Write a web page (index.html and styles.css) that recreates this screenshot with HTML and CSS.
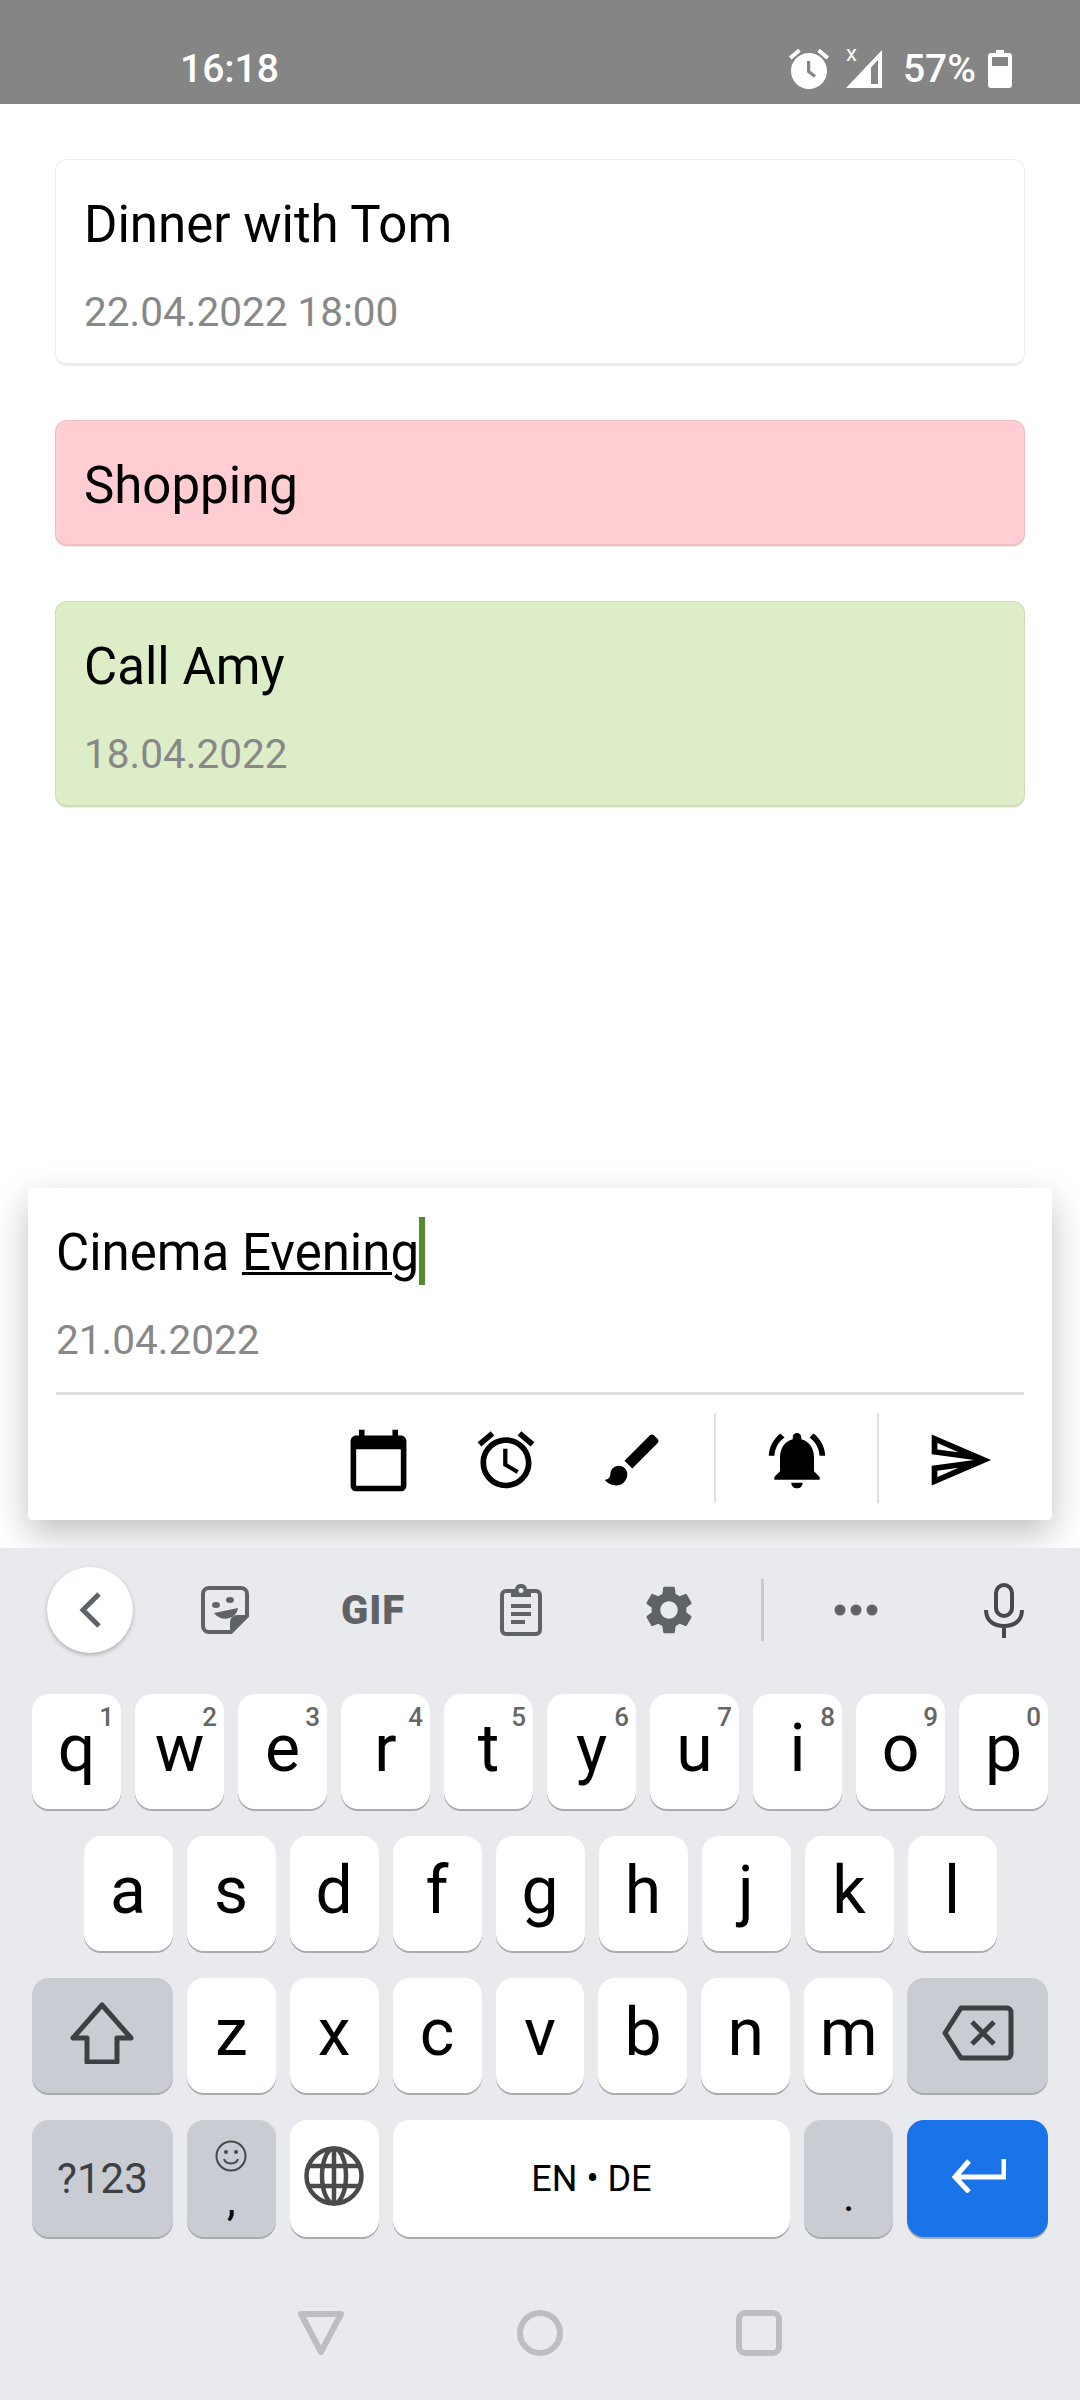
FILE: index.html
```html
<!DOCTYPE html>
<html lang="en">
<head>
    <meta charset="UTF-8">
    <meta name="viewport" content="width=device-width, initial-scale=1.0">
    <title>Todo</title>
    <link rel="stylesheet" href="styles.css">
</head>
<body>
    <header class="status-bar">
        <span class="status-time">16:18</span>
        <div class="status-icons">
            <svg class="status-alarm" viewBox="0 0 24 24" width="48" height="48">
                <path fill="#fff" d="M22 5.72l-4.6-3.86-1.29 1.53 4.6 3.86L22 5.72zM7.88 3.39L6.6 1.86 2 5.71l1.29 1.53 4.59-3.85zM12 4c-4.97 0-9 4.03-9 9s4.03 9 9 9 9-4.03 9-9-4.03-9-9-9z"/>
                <path fill="none" stroke="#858585" stroke-width="1.6" d="M11.8 8v5.2l3.2 2.6"/>
            </svg>
            <div class="status-signal">
                <span class="signal-x">x</span>
                <svg viewBox="0 0 36 38" width="36" height="38">
                    <path fill="#fff" d="M36 0v38H0zM32 10 25 17.500V34h7z"/>
                </svg>
            </div>
            <span class="status-battery-text">57%</span>
            <svg class="status-battery" viewBox="0 0 24 38" width="24" height="38">
                <path fill="#fff" fill-rule="evenodd" d="M8 0h8v3h5a3 3 0 0 1 3 3v29a3 3 0 0 1-3 3H3a3 3 0 0 1-3-3V6a3 3 0 0 1 3-3h5zM4 7v9h16V7z"/>
            </svg>
        </div>
    </header>

    <main class="list">
        <div class="card">
            <div class="title">Dinner with Tom</div>
            <div class="date">22.04.2022 18:00</div>
        </div>
        <div class="card card-pink">
            <div class="title">Shopping</div>
        </div>
        <div class="card card-green">
            <div class="title">Call Amy</div>
            <div class="date">18.04.2022</div>
        </div>
    </main>

    <section class="composer">
        <div class="composer-text">
            <div class="title">Cinema <span class="typing">Evening</span><span class="caret"></span></div>
            <div class="date">21.04.2022</div>
        </div>
        <div class="composer-tools">
            <button class="tool">
                <svg viewBox="0 0 24 24" width="67" height="67"><path d="M20 3h-1V1h-2v2H7V1H5v2H4c-1.1 0-2 .9-2 2v16c0 1.1.9 2 2 2h16c1.1 0 2-.9 2-2V5c0-1.1-.9-2-2-2zm0 18H4V8h16v13z"/></svg>
            </button>
            <button class="tool">
                <svg viewBox="0 0 24 24" width="68" height="68"><path d="M22 5.72l-4.6-3.86-1.29 1.53 4.6 3.86L22 5.72zM7.88 3.39L6.6 1.86 2 5.71l1.29 1.53 4.59-3.85zM12.5 8H11v6l4.75 2.85.75-1.23-4-2.37V8zM12 4c-4.97 0-9 4.03-9 9s4.03 9 9 9 9-4.03 9-9-4.03-9-9-9zm0 16c-3.87 0-7-3.13-7-7s3.13-7 7-7 7 3.13 7 7-3.13 7-7 7z"/></svg>
            </button>
            <button class="tool">
                <svg viewBox="0 0 24 24" width="68" height="68"><path d="M7 14c-1.66 0-3 1.34-3 3 0 1.31-1.16 2-2 2 .92 1.22 2.49 2 4 2 2.21 0 4-1.79 4-4 0-1.66-1.34-3-3-3zm13.71-9.37l-1.34-1.34c-.39-.39-1.02-.39-1.41 0L9 12.25 11.75 15l8.96-8.96c.39-.39.39-1.03 0-1.41z"/></svg>
            </button>
            <span class="tool-sep"></span>
            <button class="tool tool-wide">
                <svg viewBox="0 0 24 24" width="68" height="68"><path d="M7.58 4.08L6.15 2.65C3.75 4.48 2.17 7.3 2.03 10.5h2c.15-2.65 1.51-4.97 3.55-6.42zm12.39 6.42h2c-.15-3.2-1.73-6.02-4.12-7.85l-1.42 1.43c2.02 1.45 3.39 3.77 3.54 6.42zM18 11c0-3.07-1.64-5.64-4.5-6.32V4c0-.83-.67-1.5-1.5-1.5s-1.5.67-1.5 1.5v.68C7.63 5.36 6 7.92 6 11v5l-2 2v1h16v-1l-2-2v-5zm-6 11c.14 0 .27-.01.4-.04.65-.14 1.18-.58 1.44-1.18.1-.24.15-.5.15-.78h-4c.01 1.1.9 2 2.01 2z"/></svg>
            </button>
            <span class="tool-sep"></span>
            <button class="tool tool-wide">
                <svg viewBox="0 0 24 24" width="68" height="68"><path d="M4.01 6.03l7.51 3.22-7.52-1 .01-2.22m7.5 8.72L4 17.97v-2.22l7.51-1M2.01 3L2 10l15 2-15 2 .01 7L23 12 2.01 3z"/></svg>
            </button>
        </div>
    </section>

    <section class="keyboard">
        <div class="kb-tools">
            <button class="kb-back">
                <svg viewBox="0 0 24 36" width="24" height="36"><path fill="none" stroke="#5f6368" stroke-width="5" d="M21 2 5 18l16 16"/></svg>
            </button>
            <div class="kb-tool">
                <svg viewBox="0 0 48 48" width="48" height="48">
                    <path fill="none" stroke="#5f6368" stroke-width="4" d="M8 2h32a6 6 0 0 1 6 6v22L30 46H8a6 6 0 0 1-6-6V8a6 6 0 0 1 6-6z"/>
                    <path fill="#5f6368" d="M46 29H36a7 7 0 0 0-7 7v10zM13 27l24-5c-1 11-17 15-24 5z"/>
                    <ellipse fill="#5f6368" cx="15" cy="19" rx="4" ry="3"/>
                    <ellipse fill="#5f6368" cx="29" cy="14" rx="4" ry="3"/>
                </svg>
            </div>
            <div class="kb-tool kb-gif">GIF</div>
            <div class="kb-tool">
                <svg viewBox="0 0 42 52" width="42" height="52">
                    <path fill="none" stroke="#5f6368" stroke-width="4" d="M13 7H6a4 4 0 0 0-4 4v35a4 4 0 0 0 4 4h30a4 4 0 0 0 4-4V11a4 4 0 0 0-4-4h-7"/>
                    <path fill="#5f6368" fill-rule="evenodd" d="M21 0a6 6 0 0 1 6 5h4v8H11V5h4a6 6 0 0 1 6-5zm0 4a2.500 2.500 0 1 0 0 5 2.500 2.500 0 0 0 0-5zM11 20h20v4H11zM11 28h20v4H11zM11 36h14v4H11z"/>
                </svg>
            </div>
            <div class="kb-tool">
                <svg viewBox="0 0 24 24" width="58" height="58"><path fill="#5f6368" d="M19.14 12.94c.04-.3.06-.61.06-.94 0-.32-.02-.64-.07-.94l2.03-1.58c.18-.14.23-.41.12-.61l-1.92-3.32c-.12-.22-.37-.29-.59-.22l-2.39.96c-.5-.38-1.03-.7-1.62-.94l-.36-2.54c-.04-.24-.24-.41-.48-.41h-3.84c-.24 0-.43.17-.47.41l-.36 2.54c-.59.24-1.13.57-1.62.94l-2.39-.96c-.22-.08-.47 0-.59.22L2.74 8.87c-.12.21-.08.47.12.61l2.03 1.58c-.05.3-.09.63-.09.94s.02.64.07.94l-2.03 1.58c-.18.14-.23.41-.12.61l1.92 3.32c.12.22.37.29.59.22l2.39-.96c.5.38 1.03.7 1.62.94l.36 2.54c.05.24.24.41.48.41h3.84c.24 0 .44-.17.47-.41l.36-2.54c.59-.24 1.13-.56 1.62-.94l2.39.96c.22.08.47 0 .59-.22l1.92-3.32c.12-.22.07-.47-.12-.61l-2.01-1.58zM12 15.6c-1.98 0-3.6-1.62-3.6-3.6s1.62-3.6 3.6-3.6 3.6 1.62 3.6 3.6-1.62 3.6-3.6 3.6z"/></svg>
            </div>
            <span class="kb-sep"></span>
            <div class="kb-tool">
                <svg viewBox="0 0 44 12" width="44" height="12"><g fill="#5f6368"><circle cx="6" cy="6" r="5.500"/><circle cx="22" cy="6" r="5.500"/><circle cx="38" cy="6" r="5.500"/></g></svg>
            </div>
            <div class="kb-tool">
                <svg viewBox="0 0 40 56" width="40" height="56">
                    <g fill="none" stroke="#46484b" stroke-width="4">
                        <rect x="12" y="3" width="16" height="31" rx="8"/>
                        <path d="M2 28c0 11 8 16 18 16s18-5 18-16M20 44v12"/>
                    </g>
                </svg>
            </div>
        </div>

        <div class="kb-row">
            <div class="key">q<span class="hint">1</span></div>
            <div class="key">w<span class="hint">2</span></div>
            <div class="key">e<span class="hint">3</span></div>
            <div class="key">r<span class="hint">4</span></div>
            <div class="key">t<span class="hint">5</span></div>
            <div class="key">y<span class="hint">6</span></div>
            <div class="key">u<span class="hint">7</span></div>
            <div class="key">i<span class="hint">8</span></div>
            <div class="key">o<span class="hint">9</span></div>
            <div class="key">p<span class="hint">0</span></div>
        </div>
        <div class="kb-row kb-row-center">
            <div class="key">a</div>
            <div class="key">s</div>
            <div class="key">d</div>
            <div class="key">f</div>
            <div class="key">g</div>
            <div class="key">h</div>
            <div class="key">j</div>
            <div class="key">k</div>
            <div class="key">l</div>
        </div>
        <div class="kb-row">
            <div class="key key-wide key-gray">
                <svg viewBox="0 0 64 62" width="64" height="62"><path fill="none" stroke="#3c4043" stroke-width="5" stroke-linejoin="round" d="M32 3 3 36h14v24h30V36h14z"/></svg>
            </div>
            <div class="key">z</div>
            <div class="key">x</div>
            <div class="key">c</div>
            <div class="key">v</div>
            <div class="key">b</div>
            <div class="key">n</div>
            <div class="key">m</div>
            <div class="key key-wide key-gray">
                <svg viewBox="0 0 72 56" width="72" height="56"><g fill="none" stroke="#3c4043" stroke-width="5" stroke-linejoin="round"><path d="M19 3h46a4 4 0 0 1 4 4v42a4 4 0 0 1-4 4H19L3 28z"/><path d="M30 17l22 22M52 17 30 39"/></g></svg>
            </div>
        </div>
        <div class="kb-row kb-row-last">
            <div class="key key-wide key-gray key-label">?123</div>
            <div class="key key-gray key-comma">
                <svg viewBox="0 0 32 32" width="32" height="32">
                    <g fill="none" stroke="#46484b" stroke-width="2"><circle cx="16" cy="16" r="14.500"/><path d="M9 19c2 6 12 6 14 0"/></g>
                    <circle cx="11" cy="12" r="2" fill="#46484b"/><circle cx="21" cy="12" r="2" fill="#46484b"/>
                </svg>
                <span class="comma">,</span>
            </div>
            <div class="key">
                <svg viewBox="0 0 60 60" width="60" height="60"><g fill="none" stroke="#4a4a4a" stroke-width="4.500"><circle cx="30" cy="30" r="27.500"/><ellipse cx="30" cy="30" rx="12" ry="27.500"/><path d="M30 3v54M5 20h50M5 40h50"/></g></svg>
            </div>
            <div class="key key-space">EN • DE</div>
            <div class="key key-gray key-dot">.</div>
            <div class="key key-wide key-enter">
                <svg viewBox="0 0 56 34" width="56" height="34"><path fill="none" stroke="#fff" stroke-width="5" d="M54 0v18H6M19 2 5 18l14 15"/></svg>
            </div>
        </div>

        <nav class="nav-bar">
            <svg viewBox="0 0 46 44" width="46" height="44"><path fill="none" stroke="#bdbec0" stroke-width="6" stroke-linejoin="round" d="M3 3h40L23 41z"/></svg>
            <svg viewBox="0 0 46 46" width="46" height="46"><circle cx="23" cy="23" r="20" fill="none" stroke="#bdbec0" stroke-width="6"/></svg>
            <svg viewBox="0 0 46 46" width="46" height="46"><rect x="3" y="3" width="40" height="40" rx="6" fill="none" stroke="#bdbec0" stroke-width="6"/></svg>
        </nav>
    </section>
</body>
</html>
```

FILE: styles.css
```css
* {
    box-sizing: border-box;
}
body {
    font-family: Roboto, "Liberation Sans", sans-serif;
    margin: 0;
    padding: 0;
    width: 1080px;
    height: 2400px;
    display: flex;
    flex-direction: column;
    background-color: #fff;
    color: #000;
    overflow: hidden;
}
button {
    background: none;
    border: none;
    padding: 0;
}
svg {
    display: block;
}

/* status bar */
.status-bar {
    height: 104px;
    background-color: #858585;
    color: #fff;
    display: flex;
    align-items: center;
    justify-content: space-between;
    padding: 34px 68px 0 180px;
}
.status-time {
    font-size: 39px;
    font-weight: 500;
}
.status-icons {
    display: flex;
    align-items: center;
}
.status-alarm {
    margin-right: 13px;
}
.status-signal {
    position: relative;
    margin-right: 21px;
}
.signal-x {
    position: absolute;
    top: -9px;
    left: 0;
    font-size: 22px;
    line-height: 26px;
}
.status-battery-text {
    font-size: 39px;
    font-weight: 500;
    margin-right: 12px;
}

/* notes */
.list {
    flex: 1;
    padding: 55px 55px 0;
}
.card {
    border: 1px solid rgba(0, 0, 0, 0.07);
    border-bottom-width: 2px;
    border-radius: 12px;
    box-shadow: 0 1px 1px rgba(0, 0, 0, 0.08);
    padding: 35px 28px 28px;
    margin-bottom: 55px;
}
.card-pink {
    background-color: #ffcdd2;
}
.card-green {
    background-color: #dcedc8;
}
.title {
    font-size: 51px;
    line-height: 60px;
}
.date {
    font-size: 40.5px;
    line-height: 45px;
    color: #888;
    margin-top: 35px;
}

/* input box above the keyboard */
.composer {
    margin: 0 28px 28px;
    background-color: #fff;
    border-radius: 4px;
    box-shadow: 0 14px 36px rgba(0, 0, 0, 0.25);
}
.composer-text {
    margin: 0 28px;
    padding: 35px 0 29px;
    border-bottom: 3px solid #e0e0e0;
}
.typing {
    text-decoration: underline;
    text-decoration-thickness: 3px;
}
.caret {
    display: inline-block;
    width: 6px;
    height: 68px;
    margin-top: -10px;
    margin-bottom: -15px;
    background-color: #558b2f;
}
.composer-tools {
    height: 125px;
    display: flex;
    align-items: center;
    justify-content: flex-end;
    padding-right: 12px;
}
.tool {
    width: 127px;
    display: flex;
    justify-content: center;
    padding-top: 5px;
}
.tool-wide {
    width: 161px;
}
.tool-sep {
    width: 2px;
    height: 90px;
    background-color: #e0e0e0;
}
.tool-sep:first-of-type {
    margin-left: 18px;
}

/* keyboard */
.keyboard {
    position: relative;
    height: 852px;
    background-color: #e8eaed;
    padding: 0 32px;
}
.kb-tools {
    height: 124px;
    margin: 0 -32px 22px;
    padding-left: 47px;
    display: flex;
    align-items: center;
}
.kb-back {
    width: 86px;
    height: 86px;
    border-radius: 50%;
    background-color: #fff;
    box-shadow: 0 2px 4px rgba(0, 0, 0, 0.25);
    display: flex;
    align-items: center;
    justify-content: center;
    margin-right: 18px;
}
.kb-tool {
    width: 148px;
    display: flex;
    justify-content: center;
    align-items: center;
}
.kb-gif {
    font-size: 40px;
    font-weight: 900;
    color: #5f6368;
    letter-spacing: 1px;
}
.kb-sep {
    width: 3px;
    height: 62px;
    background-color: #c8cace;
    margin: 0 18px 0 18px;
}
.kb-row {
    display: flex;
    gap: 14px;
    height: 115px;
    margin-bottom: 27px;
}
.kb-row-center {
    justify-content: center;
}
.kb-row-last {
    height: 117px;
    margin-bottom: 0;
}
.key {
    position: relative;
    width: 89px;
    background-color: #fff;
    border-radius: 17px;
    box-shadow: 0 2px 0 #a9abae;
    display: flex;
    align-items: center;
    justify-content: center;
    font-size: 66px;
    padding-bottom: 6px;
}
.key-wide {
    width: 141px;
}
.key-gray {
    background-color: #c9ccd3;
}
.key-label {
    font-size: 42px;
    color: #3c4043;
    padding-bottom: 0;
}
.key-comma {
    flex-direction: column;
    padding: 2px 0 0;
}
.comma {
    font-size: 44px;
    line-height: 40px;
    margin-top: 8px;
}
.key-space {
    width: 398px;
    font-size: 36px;
    padding-bottom: 0;
}
.key-dot {
    font-size: 44px;
    padding: 34px 0 0;
}
.key-enter {
    background-color: #1a73e8;
}
.hint {
    position: absolute;
    top: 8px;
    right: 7px;
    font-size: 26px;
    line-height: 30px;
    font-weight: 500;
    color: #666;
}
.nav-bar {
    display: flex;
    justify-content: center;
    align-items: center;
    gap: 173px;
    margin-top: 73px;
}
```
